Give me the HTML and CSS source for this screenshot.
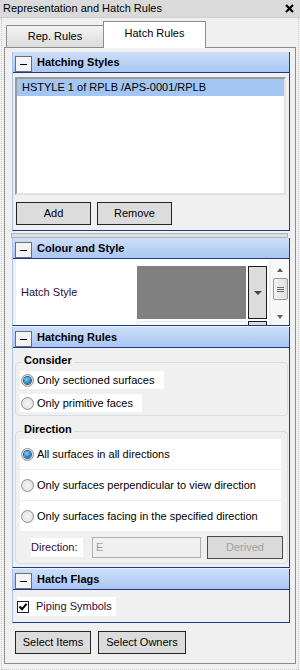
FILE: index.html
```html
<!DOCTYPE html>
<html>
<head>
<meta charset="utf-8">
<link rel="stylesheet" href="styles.css">
</head>
<body>
<div class="titlebar">
  <span class="title">Representation and Hatch Rules</span>
  <svg class="close" width="9" height="9" viewBox="0 0 9 9"><path d="M1 1L8 8M8 1L1 8" stroke="#000" stroke-width="2.2" fill="none"/></svg>
</div>
<div class="frame">
  <div class="tabs">
    <div class="tab">Rep. Rules</div>
    <div class="tab active">Hatch Rules</div>
  </div>
  <div class="panel">
    <section class="sec">
      <div class="hdr"><span class="tog"><span class="minus"></span></span><span class="htxt">Hatching Styles</span></div>
      <div class="body b1">
        <div class="list"><div class="item sel">HSTYLE 1 of RPLB /APS-0001/RPLB</div></div>
        <div class="btnrow"><button class="btn w75">Add</button><button class="btn w75">Remove</button></div>
      </div>
    </section>
    <div class="splitter"></div>
    <section class="sec">
      <div class="hdr"><span class="tog"><span class="minus"></span></span><span class="htxt">Colour and Style</span></div>
      <div class="body b2">
        <div class="grid">
          <div class="prow">
            <div class="plabel">Hatch Style</div>
            <div class="swatch"></div>
            <div class="ddbtn"><span class="tri"></span></div>
          </div>
          <div class="prow2">
            <div class="plabel2"></div>
            <div class="swatch2"></div>
            <div class="ddbtn2"></div>
          </div>
        </div>
        <div class="vscroll">
          <span class="arr up"></span>
          <span class="thumb"><i></i><i></i><i></i></span>
          <span class="arr down"></span>
        </div>
      </div>
    </section>
    <section class="sec mt1">
      <div class="hdr"><span class="tog"><span class="minus"></span></span><span class="htxt">Hatching Rules</span></div>
      <div class="body b3">
        <div class="group g1">
          <div class="gtitle">Consider</div>
          <div class="ropt r1"><span class="radio on"><span class="dot"></span></span><span>Only sectioned surfaces</span></div>
          <div class="ropt r2"><span class="radio"></span><span>Only primitive faces</span></div>
        </div>
        <div class="group g2">
          <div class="gtitle">Direction</div>
          <div class="drows">
            <div class="drow"><span class="radio on"><span class="dot"></span></span><span>All surfaces in all directions</span></div>
            <div class="drow"><span class="radio"></span><span>Only surfaces perpendicular to view direction</span></div>
            <div class="drow"><span class="radio"></span><span>Only surfaces facing in the specified direction</span></div>
          </div>
          <div class="dirline">
            <span class="dlabel">Direction:</span>
            <span class="dinput">E</span>
            <button class="btn derived">Derived</button>
          </div>
        </div>
      </div>
    </section>
    <section class="sec mt1">
      <div class="hdr"><span class="tog"><span class="minus"></span></span><span class="htxt">Hatch Flags</span></div>
      <div class="body b4">
        <div class="crow"><span class="check"><svg width="10" height="10" viewBox="0 0 10 10"><path d="M1.5 4.5L4 7.2L8.6 1.8" stroke="#000" stroke-width="2" fill="none"/></svg></span><span class="ctext">Piping Symbols</span></div>
      </div>
    </section>
    <div class="btnrow bottom"><button class="btn w76">Select Items</button><button class="btn w88">Select Owners</button></div>
  </div>
</div>
</body>
</html>
```
FILE: styles.css
```css
* { box-sizing: border-box; }
html, body { margin: 0; padding: 0; }
body {
  width: 300px;
  height: 670px;
  overflow: hidden;
  background: #f0f0f0;
  font: 11px/13px "Liberation Sans", Arial, sans-serif;
  color: #000;
}
.titlebar {
  height: 18px;
  background: #dadada;
  border-bottom: 1px dotted #c4c4c4;
  display: flex;
  align-items: center;
  justify-content: space-between;
  padding: 0 6px 1px 3px;
  font-size: 11px;
}
.close { display: block; }
.frame {
  margin: 0 1px;
  height: 652px;
  border-left: 1px dotted #c8c8c8;
  border-right: 1px dotted #c8c8c8;
  border-bottom: 1px dotted #c8c8c8;
}
.tabs {
  height: 29px;
  display: flex;
  align-items: flex-end;
  padding-left: 4px;
}
.tab {
  width: 97px;
  height: 22px;
  border: 1px solid #8d8d8d;
  border-right: none;
  border-bottom: none;
  border-top-left-radius: 2px;
  background: linear-gradient(#f3f3f3, #dcdcdc);
  text-align: center;
  padding-top: 4px;
}
.tab.active {
  width: 103px;
  height: 27px;
  margin-bottom: -1px;
  border-right: 1px solid #8d8d8d;
  border-radius: 0;
  background: #fff;
  padding-top: 5px;
  position: relative;
  z-index: 1;
}
.panel {
  margin-left: 2px;
  width: 292px;
  height: 617px;
  border: 1px solid #8d8d8d;
  background: #f0f0f0;
  padding: 4px 0 0 7px;
}
.sec {
  width: 278px;
  border-left: 1px solid #a6c2ee;
  border-right: 1px solid #1d3a8c;
  border-bottom: 1px solid #1d3a8c;
}
.mt1 { margin-top: 1px; }
.hdr {
  height: 21px;
  border-bottom: 1px solid #1d3a8c;
  background: linear-gradient(#cddff9, #a9c6f3);
  display: flex;
  align-items: flex-end;
  padding-left: 2px;
}
.tog {
  width: 17px;
  height: 16px;
  border: 1px solid #6e6e6e;
  background: #f4f4f4;
  display: flex;
  align-items: center;
  justify-content: center;
}
.minus { width: 7px; height: 1px; background: #000; }
.htxt {
  font-weight: bold;
  align-self: center;
  margin-left: 5px;
  margin-top: 1px;
}
.b1 { padding: 4px 0 5px 2px; }
.list {
  width: 271px;
  height: 118px;
  border: 2px solid;
  border-color: #9a9a9a #e2e2e2 #e2e2e2 #9a9a9a;
  background: #fff;
}
.item { height: 17px; padding: 2px 0 0 5px; }
.item.sel { background: #a2c6f1; }
.btnrow { display: flex; margin-top: 7px; gap: 6px; margin-left: 1px; }
.btn {
  font: 11px/13px "Liberation Sans", Arial, sans-serif;
  color: #000;
  height: 23px;
  background: #dcdcdc;
  border: 1px solid #262626;
  padding: 0;
  border-radius: 0;
}
.w75 { width: 75px; }
.w76 { width: 76px; }
.w88 { width: 88px; }
.splitter {
  width: 277px;
  height: 5px;
  margin-top: 2px;
  margin-left: -1px;
  border: 1px solid #b4b4b4;
  background: #dedede;
}
.b2 {
  display: flex;
  height: 66px;
  padding-left: 3px;
  overflow: hidden;
}
.grid {
  width: 254px;
  background: #fff;
  padding-top: 7px;
}
.prow { display: flex; height: 53px; }
.plabel {
  width: 121px;
  display: flex;
  align-items: center;
  padding-left: 5px;
  color: #2d0e3a;
}
.swatch { width: 109px; background: #808080; }
.ddbtn {
  width: 19px;
  margin-left: 2px;
  border: 1px solid #1c1c1c;
  background: #dcdcdc;
  display: flex;
  align-items: center;
  justify-content: center;
}
.tri {
  width: 0; height: 0;
  border-left: 4px solid transparent;
  border-right: 4px solid transparent;
  border-top: 4px solid #3a4658;
}
.prow2 { display: flex; height: 10px; margin-top: 2px; }
.plabel2 { width: 121px; }
.swatch2 { width: 109px; border: 1px solid #e6e6e6; background: #fbfbfb; }
.ddbtn2 { width: 19px; margin-left: 2px; border: 1px solid #1c1c1c; border-bottom: none; background: #dcdcdc; }
.vscroll {
  width: 18px;
  margin-left: 2px;
  background: #f7f7f7;
  display: flex;
  flex-direction: column;
  align-items: center;
  padding-top: 9px;
}
.arr { width: 0; height: 0; border-left: 3.5px solid transparent; border-right: 3.5px solid transparent; }
.arr.up { border-bottom: 4px solid #5e5e5e; }
.arr.down { border-top: 4px solid #5e5e5e; margin-top: 15px; }
.thumb {
  width: 15px;
  height: 22px;
  margin-top: 6px;
  border: 1px solid #9a9a9a;
  border-radius: 2px;
  background: linear-gradient(to right, #f4f4f4, #dedede);
  display: flex;
  flex-direction: column;
  align-items: center;
  justify-content: center;
  gap: 1px;
}
.thumb i { display: block; width: 7px; height: 1px; background: #6b6b6b; }
.b3 { padding: 14px 0 3px 2px; }
.group {
  width: 273px;
  border: 1px solid #d6dde3;
  border-radius: 4px;
}
.gtitle {
  display: table;
  font-weight: bold;
  background: #f0f0f0;
  margin: -9px 0 0 6px;
  padding: 0 2px;
}
.g1 { padding-bottom: 3px; }
.ropt {
  display: flex;
  align-items: center;
  height: 18px;
  margin-left: 4px;
  background: #fff;
  padding-left: 1px;
  gap: 3px;
}
.r1 { width: 144px; margin-top: 4px; }
.r2 { width: 122px; margin-top: 5px; }
.radio {
  width: 13px;
  height: 13px;
  border: 1px solid #8f9090;
  border-radius: 50%;
  background: radial-gradient(circle at 50% 50%, #f8f8f8 0%, #e6e6e6 60%, #d2d2d2 100%);
  display: flex;
  align-items: center;
  justify-content: center;
  flex: none;
}
.dot {
  width: 7px;
  height: 7px;
  border-radius: 50%;
  background: radial-gradient(circle at 40% 35%, #7fd0fb 0%, #2b86c9 55%, #14467a 100%);
  box-shadow: 0 0 0 1px #2d5d8d;
}
.g2 { margin-top: 15px; padding-bottom: 4px; }
.drows {
  width: 261px;
  margin: 3px 0 0 4px;
  display: flex;
  flex-direction: column;
  gap: 1px;
  background: #ececec;
  padding-bottom: 1px;
}
.drow {
  height: 30px;
  background: #fff;
  display: flex;
  align-items: center;
  padding-left: 1px;
  gap: 3px;
}
.dirline {
  display: flex;
  align-items: center;
  margin: 4px 0 0 15px;
  height: 23px;
}
.dlabel {
  width: 52px;
  height: 19px;
  background: #fff;
  color: #2d0e3a;
  display: flex;
  align-items: center;
}
.dinput {
  width: 109px;
  height: 21px;
  margin-left: 9px;
  border: 1px solid #b0b0b0;
  background: #f0f0f0;
  color: #9c9c9c;
  display: flex;
  align-items: center;
  padding-left: 3px;
}
.derived {
  width: 76px;
  margin-left: 6px;
  color: #a0a0a0;
  border-color: #4a4a4a;
  background: #dadada;
}
.b4 { padding: 7px 0 6px 4px; }
.crow {
  width: 99px;
  height: 19px;
  background: #fff;
  display: flex;
  align-items: center;
}
.check {
  width: 12px;
  height: 12px;
  border: 1px solid #1f1f1f;
  background: #fff;
  display: flex;
  align-items: center;
  justify-content: center;
  flex: none;
}
.check svg { display: block; }
.ctext { margin-left: 7px; color: #2d0e3a; }
.btnrow.bottom { margin-top: 8px; margin-left: 3px; gap: 7px; }
```
